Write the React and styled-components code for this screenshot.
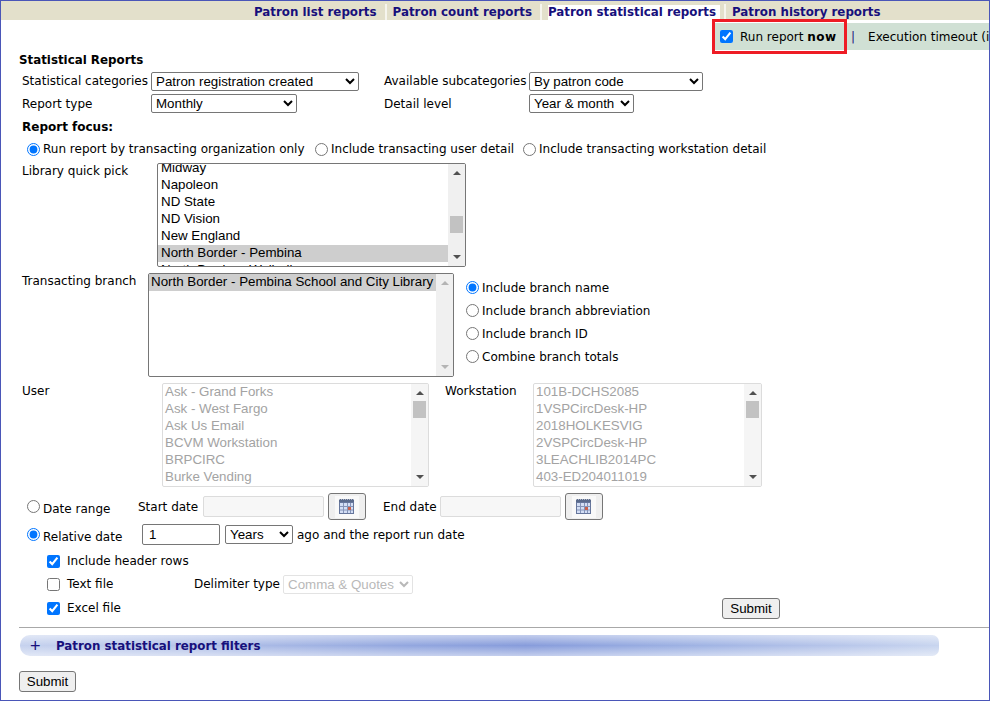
import React from "react";
import styled, { createGlobalStyle } from "styled-components";

const UI_FONT = `"DejaVu Sans", Verdana, sans-serif`;
const CONTROL_FONT = `"Liberation Sans", Arial, sans-serif`;

const GlobalStyle = createGlobalStyle`
  html, body { margin: 0; padding: 0; background: #fff; }
  body { font-family: ${UI_FONT}; font-size: 12px; color: #000; }
  * { box-sizing: border-box; }
`;

const App = () => (
  <>
    <GlobalStyle />
    <Frame>
      <TabBar>
        <Tab><TabLabel>Patron list reports</TabLabel></Tab>
        <Tab><TabLabel>Patron count reports</TabLabel></Tab>
        <Tab><TabLabel $active>Patron statistical reports</TabLabel></Tab>
        <Tab><TabLabel>Patron history reports</TabLabel></Tab>
      </TabBar>
      <ToolStrip>
        <RunNow>
          <Check defaultChecked />
          <span>
            Run report <Strong>now</Strong>
          </span>
          <Callout />
        </RunNow>
        <Pipe>|</Pipe>
        <span>Execution timeout (in minutes)</span>
      </ToolStrip>

      <Form>
        <Heading>Statistical Reports</Heading>

        <FieldRow $h={22} $mt={2}>
          <Label $w={129}>Statistical categories</Label>
          <Select $w={208}>
            <option>Patron registration created</option>
          </Select>
          <Label $w={145} $ml={25}>Available subcategories</Label>
          <Select $w={174}>
            <option>By patron code</option>
          </Select>
        </FieldRow>
        <FieldRow $h={23}>
          <Label $w={129}>Report type</Label>
          <Select $w={146}>
            <option>Monthly</option>
          </Select>
          <Label $w={145} $ml={87}>Detail level</Label>
          <Select $w={105}>
            <option>Year &amp; month</option>
          </Select>
        </FieldRow>

        <SubHeading>Report focus:</SubHeading>
        <FocusRow>
          <Radio name="focus" defaultChecked />
          <FocusText $w={275}>Run report by transacting organization only</FocusText>
          <Radio name="focus" />
          <FocusText $w={195}>Include transacting user detail</FocusText>
          <Radio name="focus" />
          <FocusText>Include transacting workstation detail</FocusText>
        </FocusRow>

        <ListRow $mt={4}>
          <Label $w={135} $top={1}>Library quick pick</Label>
          <ListBox
            $w={309}
            $offset={-4}
            $pad={3}
            items={["Midway", "Napoleon", "ND State", "ND Vision", "New England", "North Border - Pembina", "North Border - Walhalla"]}
            selected="North Border - Pembina"
            thumbTop={36}
          />
        </ListRow>

        <ListRow $mt={6}>
          <Label $w={126} $top={1}>Transacting branch</Label>
          <ListBox
            $w={306}
            items={["North Border - Pembina School and City Library"]}
            selected="North Border - Pembina School and City Library"
            faintArrows
          />
          <BranchOptions>
            <BranchOption><Radio name="branch" defaultChecked />Include branch name</BranchOption>
            <BranchOption><Radio name="branch" />Include branch abbreviation</BranchOption>
            <BranchOption><Radio name="branch" />Include branch ID</BranchOption>
            <BranchOption><Radio name="branch" />Combine branch totals</BranchOption>
          </BranchOptions>
        </ListRow>

        <ListRow $mt={6}>
          <Label $w={140} $top={1}>User</Label>
          <ListBox
            $w={267}
            disabled
            items={["Ask - Grand Forks", "Ask - West Fargo", "Ask Us Email", "BCVM Workstation", "BRPCIRC", "Burke Vending"]}
            thumbTop={1}
          />
          <Label $w={88} $ml={16} $top={1}>Workstation</Label>
          <ListBox
            $w={229}
            disabled
            items={["101B-DCHS2085", "1VSPCircDesk-HP", "2018HOLKESVIG", "2VSPCircDesk-HP", "3LEACHLIB2014PC", "403-ED204011019"]}
            thumbTop={1}
          />
        </ListRow>

        <DateRow $mt={6}>
          <DateChoice $w={111}>
            <Radio name="date" />
            <DateText>Date range</DateText>
          </DateChoice>
          <DateLabel $w={65}>Start date</DateLabel>
          <DateInput disabled />
          <CalendarButton type="button"><CalendarIcon /></CalendarButton>
          <DateLabel $w={57} $ml={17}>End date</DateLabel>
          <DateInput disabled />
          <CalendarButton type="button"><CalendarIcon /></CalendarButton>
        </DateRow>

        <DateRow $mt={3} $h={23}>
          <DateChoice $w={115}>
            <Radio name="date" defaultChecked />
            <DateText>Relative date</DateText>
          </DateChoice>
          <NumberInput defaultValue="1" />
          <Select $w={68} $ml={5}>
            <option>Years</option>
          </Select>
          <AgoText>ago and the report run date</AgoText>
        </DateRow>

        <OutputRow $mt={5}>
          <Check defaultChecked />
          <OutputText>Include header rows</OutputText>
        </OutputRow>
        <OutputRow $mt={3}>
          <Check />
          <OutputText $w={120}>Text file</OutputText>
          <OutputText $w={89}>Delimiter type</OutputText>
          <Select $w={130} disabled>
            <option>Comma &amp; Quotes</option>
          </Select>
        </OutputRow>
        <OutputRow $mt={4}>
          <Check defaultChecked />
          <OutputText>Excel file</OutputText>
          <SubmitButton $push type="button">Submit</SubmitButton>
        </OutputRow>

        <Rule />
        <FilterBar>
          <Plus>+</Plus>
          <FilterTitle>Patron statistical report filters</FilterTitle>
        </FilterBar>
        <SubmitButton $bottom type="button">Submit</SubmitButton>
      </Form>
    </Frame>
  </>
);

const ListBox = ({ items, selected, disabled, faintArrows, thumbTop, $w, $offset, $pad }) => (
  <ListFrame $w={$w} $disabled={disabled}>
    <ListItems $offset={$offset || 0}>
      {items.map((item) => (
        <ListItem key={item} $selected={item === selected} $disabled={disabled} $pad={$pad || 2}>
          {item}
        </ListItem>
      ))}
    </ListItems>
    <ScrollTrack $disabled={disabled}>
      <Arrow $faint={faintArrows} />
      {thumbTop !== undefined && <Thumb $top={thumbTop} />}
      <Arrow $down $faint={faintArrows} />
    </ScrollTrack>
  </ListFrame>
);

const CalendarIcon = () => (
  <svg width="24" height="22" viewBox="0 0 24 22">
    <rect width="24" height="22" fill="#f9f9f9" />
    <rect x="4" y="3" width="15" height="4" fill="#5a6a8c" />
    <path d="M4 3.5h15" stroke="#b3bac8" strokeDasharray="1 1" />
    <rect x="4.5" y="6.500" width="14" height="11" fill="#d3def5" stroke="#66769c" />
    <path d="M8.500 7v10M12.500 7v10M15.500 7v10M5 10.500h13M5 14h13" stroke="#8594b8" />
    <rect x="13" y="11" width="3" height="3" fill="#c8604c" />
  </svg>
);

const Frame = styled.div`
  width: 990px;
  height: 701px;
  border: 1px solid #4a56b8;
  overflow: hidden;
  background: #fff;
`;

const TabBar = styled.div`
  height: 19px;
  background: #e3e0cb;
  display: flex;
  align-items: stretch;
  padding: 3px 0 0 247px;
`;

const Tab = styled.div`
  display: flex;
  align-items: flex-end;
  padding: 0 4px 0 6px;
  border-right: 2px solid #f6f5ee;
  &:last-child { border-right: none; }
`;

const TabLabel = styled.span`
  height: 15px;
  padding-right: 4px;
  font-size: 11.85px;
  font-weight: 700;
  line-height: 15px;
  color: #17107c;
  white-space: nowrap;
  background: ${(p) => (p.$active ? "#fff" : "transparent")};
`;

const ToolStrip = styled.div`
  margin: 3px 0 0 713px;
  height: 27px;
  background: #d0e0d4;
  display: flex;
  align-items: center;
  white-space: nowrap;
  width: 300px;
`;

const RunNow = styled.label`
  flex: none;
  display: flex;
  align-items: center;
  gap: 7px;
  padding-left: 6px;
  width: 134px;
  height: 100%;
  position: relative;
`;

const Strong = styled.b`
  letter-spacing: 0.5px;
`;

// red annotation drawn over the screenshot
const Callout = styled.span`
  position: absolute;
  left: -2px;
  top: -4px;
  width: 135px;
  height: 35px;
  border: 3px solid #ee1c25;
  pointer-events: none;
`;

const Pipe = styled.span`
  flex: none;
  color: #17107c;
  margin: 0 13px 0 3px;
`;

const Check = styled.input.attrs({ type: "checkbox" })`
  width: 13px;
  height: 13px;
  margin: 0;
  flex: none;
`;

const Radio = styled.input.attrs({ type: "radio" })`
  width: 13px;
  height: 13px;
  margin: 0;
  flex: none;
`;

const Form = styled.div`
  padding: 0 0 0 18px;
`;

const Heading = styled.div`
  font-size: 11.85px;
  font-weight: 700;
  margin-top: 2px;
  height: 16px;
  line-height: 16px;
`;

const FieldRow = styled.div`
  display: flex;
  align-items: center;
  height: ${(p) => p.$h}px;
  margin-top: ${(p) => p.$mt || 0}px;
  padding-left: 3px;
`;

const Label = styled.div`
  flex: none;
  width: ${(p) => p.$w}px;
  margin-left: ${(p) => p.$ml || 0}px;
  padding-top: ${(p) => p.$top || 0}px;
  white-space: nowrap;
`;

const Select = styled.select`
  flex: none;
  width: ${(p) => p.$w}px;
  height: 19px;
  margin: 0 0 0 ${(p) => p.$ml || 0}px;
  padding: 0;
  font-family: ${CONTROL_FONT};
  font-size: 13.33px;
  background: #fff;
  border-radius: 2px;
  border: 1px solid ${(p) => (p.disabled ? "#d8d8d8" : "#767676")};
  color: ${(p) => (p.disabled ? "#9b9b9b" : "#000")};
`;

const SubHeading = styled.div`
  font-weight: 700;
  padding-left: 3px;
  margin-top: 4px;
  height: 17px;
  line-height: 17px;
`;

const FocusRow = styled.div`
  display: flex;
  align-items: center;
  height: 20px;
  margin-top: 3px;
  padding-left: 8px;
`;

const FocusText = styled.span`
  padding-left: 3px;
  white-space: nowrap;
  width: ${(p) => (p.$w ? `${p.$w}px` : "auto")};
`;

const ListRow = styled.div`
  display: flex;
  align-items: flex-start;
  margin-top: ${(p) => p.$mt || 0}px;
  padding-left: 3px;
`;

const ListFrame = styled.div`
  flex: none;
  display: flex;
  width: ${(p) => p.$w}px;
  height: 104px;
  border: 1px solid ${(p) => (p.$disabled ? "#dcdcdc" : "#767676")};
  border-radius: 2px;
  overflow: hidden;
  background: #fff;
`;

const ListItems = styled.div`
  flex: 1;
  min-width: 0;
  margin-top: ${(p) => p.$offset}px;
  font-family: ${CONTROL_FONT};
  font-size: 13.33px;
`;

const ListItem = styled.div`
  height: 17px;
  line-height: 16px;
  padding: 0 2px 0 ${(p) => p.$pad}px;
  white-space: nowrap;
  overflow: hidden;
  background: ${(p) => (p.$selected ? "#cecece" : "transparent")};
  color: ${(p) => (p.$disabled ? "#a3a3a3" : "#000")};
`;

const ScrollTrack = styled.div`
  flex: none;
  position: relative;
  width: 17px;
  background: ${(p) => (p.$disabled ? "#f5f5f5" : "#f0f0f0")};
  display: flex;
  flex-direction: column;
  justify-content: space-between;
  align-items: center;
  padding: 7px 0;
`;

const Arrow = styled.span`
  width: 0;
  height: 0;
  border-left: 4px solid transparent;
  border-right: 4px solid transparent;
  border-top: ${(p) => (p.$down ? `4px solid ${p.$faint ? "#b4b4b4" : "#505050"}` : "none")};
  border-bottom: ${(p) => (p.$down ? "none" : `4px solid ${p.$faint ? "#b4b4b4" : "#505050"}`)};
`;

const Thumb = styled.span`
  position: absolute;
  left: 2px;
  top: ${(p) => p.$top + 16}px;
  width: 13px;
  height: 17px;
  background: #c2c2c2;
`;

const BranchOptions = styled.div`
  margin-left: 12px;
  display: flex;
  flex-direction: column;
  padding-top: 3px;
`;

const BranchOption = styled.label`
  display: flex;
  align-items: center;
  gap: 3px;
  height: 23px;
  white-space: nowrap;
`;

const DateRow = styled.div`
  display: flex;
  align-items: center;
  height: ${(p) => p.$h || 27}px;
  margin-top: ${(p) => p.$mt || 0}px;
  padding-left: 8px;
`;

const DateChoice = styled.label`
  display: flex;
  align-items: center;
  gap: 3px;
  width: ${(p) => p.$w}px;
  flex: none;
`;

const DateText = styled.span`
  padding-top: 4px;
  white-space: nowrap;
`;

const DateLabel = styled.span`
  width: ${(p) => p.$w}px;
  margin-left: ${(p) => p.$ml || 0}px;
  flex: none;
  white-space: nowrap;
`;

const DateInput = styled.input`
  width: 121px;
  height: 21px;
  margin: 0 4px 0 0;
  border: 1px solid #dcdcdc;
  border-radius: 2px;
  background: #f7f7f7;
`;

const CalendarButton = styled.button`
  width: 38px;
  height: 27px;
  padding: 0;
  display: flex;
  align-items: center;
  justify-content: center;
  background: #efefef;
  border: 1px solid #767676;
  border-radius: 3px;
`;

const NumberInput = styled.input`
  width: 78px;
  height: 21px;
  margin: 0;
  padding: 0 6px;
  font-family: ${CONTROL_FONT};
  font-size: 13.33px;
  color: #000;
  border: 1px solid #767676;
  border-radius: 2px;
`;

const AgoText = styled.span`
  margin-left: 4px;
  white-space: nowrap;
`;

const OutputRow = styled.div`
  display: flex;
  align-items: center;
  height: 20px;
  margin-top: ${(p) => p.$mt || 0}px;
  padding-left: 28px;
`;

const OutputText = styled.span`
  margin-left: 7px;
  white-space: nowrap;
  width: ${(p) => (p.$w ? `${p.$w}px` : "auto")};
  flex: none;
`;

const SubmitButton = styled.button`
  height: 21px;
  padding: 0;
  width: ${(p) => (p.$push ? "58px" : "57px")};
  font-family: ${CONTROL_FONT};
  font-size: 13.33px;
  background: #efefef;
  color: #000;
  border: 1px solid #767676;
  border-radius: 3px;
  margin-left: ${(p) => (p.$push ? "auto" : "0")};
  margin-right: ${(p) => (p.$push ? "209px" : "0")};
  margin-top: ${(p) => (p.$bottom ? "15px" : "0")};
  display: block;
`;

const Rule = styled.div`
  height: 1px;
  background: #a8a8a8;
  margin-top: 9px;
`;

const FilterBar = styled.div`
  margin: 7px 0 0 1px;
  width: 919px;
  height: 21px;
  display: flex;
  align-items: center;
  border-radius: 10px 7px 7px 10px;
  background:
    linear-gradient(to bottom, rgba(255, 255, 255, 0.5), rgba(255, 255, 255, 0) 50%, rgba(255, 255, 255, 0.5)),
    linear-gradient(to right, #c6d2ee 0, #b2c1e8 20%, #93a7df 42%, #879cdb 55%, #9db1e3 72%, #b4c3e9 87%, #c8d5ef 100%);
`;

const Plus = styled.span`
  width: 36px;
  padding-left: 10px;
  font-family: ${CONTROL_FONT};
  font-size: 18px;
  line-height: 18px;
  color: #17107c;
`;

const FilterTitle = styled.span`
  font-size: 11.85px;
  font-weight: 700;
  color: #17107c;
`;

export default App;
